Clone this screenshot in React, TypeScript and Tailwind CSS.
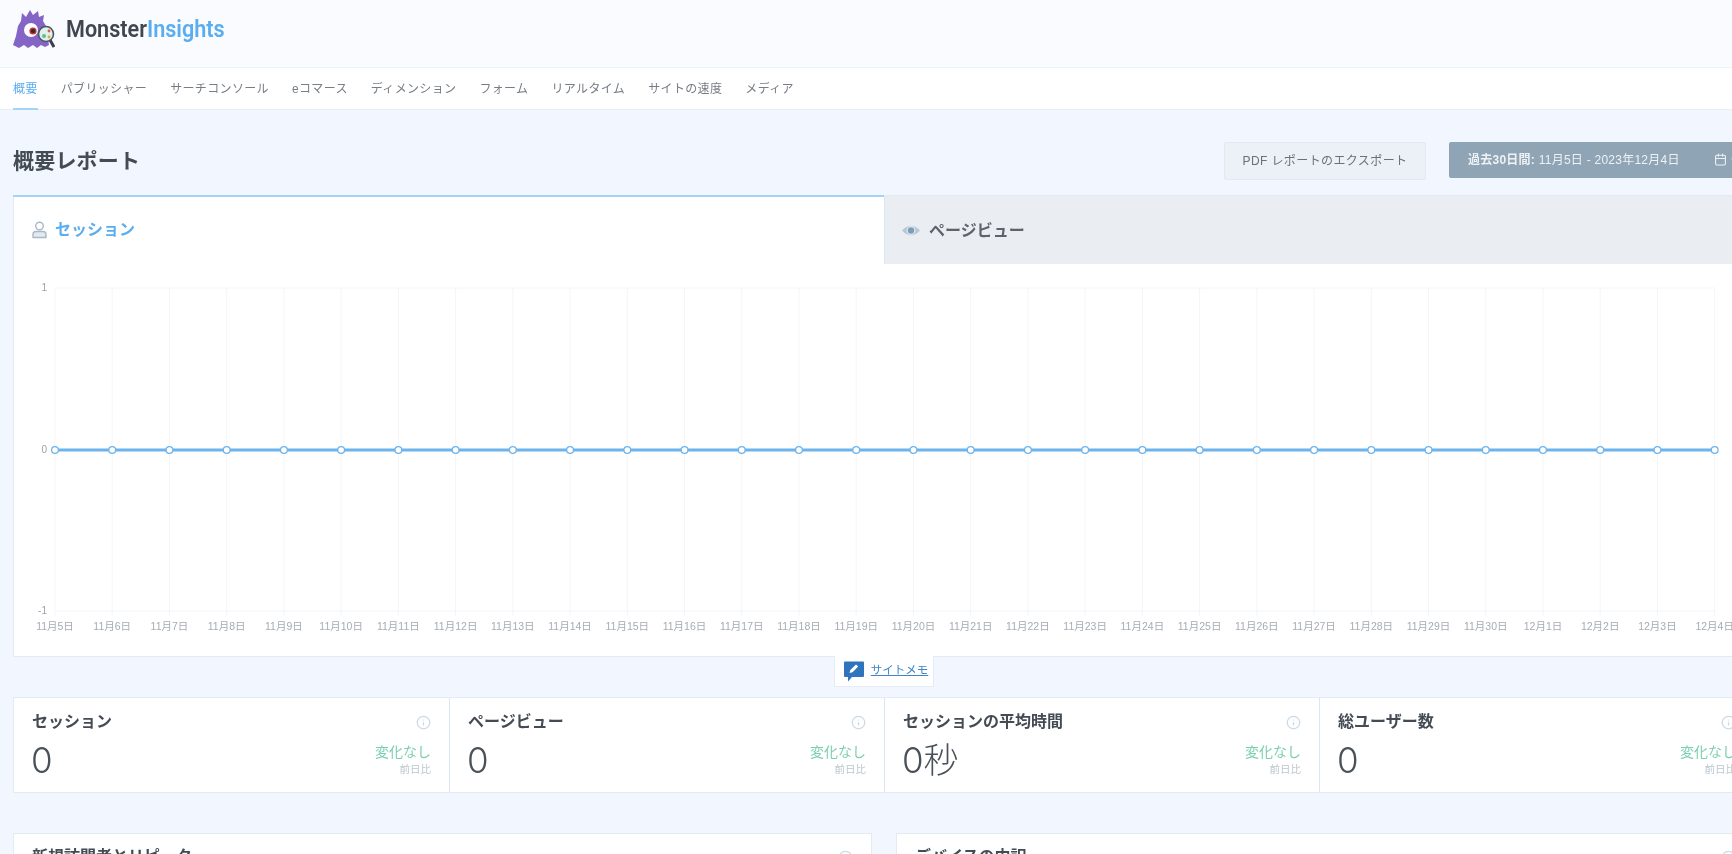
import { Calendar, ChevronDown, Info } from "lucide-react"

const navItems = ["概要", "パブリッシャー", "サーチコンソール", "eコマース", "ディメンション", "フォーム", "リアルタイム", "サイトの速度", "メディア"]

const kpis = [
    { title: "セッション", value: "0" },
    { title: "ページビュー", value: "0" },
    { title: "セッションの平均時間", value: "0秒" },
    { title: "総ユーザー数", value: "0" },
]

// 30 days, Nov 5 -> Dec 4
const days = Array.from({ length: 30 }, (_, i) => (i < 26 ? `11月${i + 5}日` : `12月${i - 25}日`))

const Logo = () => (
    <svg width="42" height="40" viewBox="0 0 42 40" className="shrink-0">
        <path
            d="M0 36 L3 27 L5 17 L8 12 L9 4 L13 8 L17 1 L20 6 L25 2 L26 8 L31 6 L30 12 L33 17 L34 24 L36 36 L32 38 L28 36 L24 39 L20 36 L15 39 L11 36 L6 39 Z"
            fill="#8465c6"
        />
        <circle cx="18" cy="21" r="7" fill="#fff" />
        <circle cx="20" cy="22" r="3.6" fill="#c9302c" />
        <circle cx="20" cy="22" r="2.1" fill="#2a2a33" />
        <path d="M37 31 L41 38" stroke="#3d3a55" strokeWidth="3" />
        <circle cx="33" cy="25" r="7.5" fill="#dff1ea" stroke="#4a5563" strokeWidth="1.6" />
        <circle cx="31" cy="27" r="2" fill="#5cc08f" />
        <circle cx="36" cy="22" r="1.4" fill="#e2574c" />
        <circle cx="36" cy="28" r="1.4" fill="#e9a23b" />
    </svg>
)

const UserIcon = () => (
    <svg width="15" height="18" viewBox="0 0 15 18" className="shrink-0">
        <circle cx="7.5" cy="5" r="3.8" fill="none" stroke="#a9b9c6" strokeWidth="1.4" />
        <path d="M1 16.5 V13.5 Q1 10.5 4 10.5 H11 Q14 10.5 14 13.5 V16.5 Z" fill="#e3e9ef" stroke="#a9b9c6" strokeWidth="1.4" strokeLinejoin="round" />
    </svg>
)

const EyeIcon = () => (
    <svg width="18" height="13" viewBox="0 0 18 13" className="shrink-0">
        <path d="M0 6.5 Q9 -3 18 6.5 Q9 16 0 6.5 Z" fill="#b4c7d6" />
        <circle cx="9" cy="6.5" r="4.4" fill="#e6edf2" />
        <circle cx="9" cy="6.5" r="3.2" fill="#7d9db6" />
    </svg>
)

const NoteIcon = () => (
    <svg width="20" height="21" viewBox="0 0 20 21" className="shrink-0">
        <path d="M1 0.5 H19 Q20 0.5 20 1.5 V15 Q20 16 19 16 H8 L4 20.5 V16 H1 Q0 16 0 15 V1.5 Q0 0.5 1 0.5 Z" fill="#2f74bd" />
        <path d="M5.5 12 L6.3 9 L12 3.4 L14.2 5.6 L8.5 11.2 Z" fill="#fff" />
    </svg>
)

const Chart = () => {
    const left = 41
    const step = 57.23
    const top = 24
    const bottom = 347
    const mid = 186
    const xs = days.map((_, i) => left + i * step)

    return (
        <svg width="1744" height="392" className="block">
            {[top, bottom].map((y) => (
                <line key={y} x1={left} x2={xs[29]} y1={y} y2={y} stroke="#f3f5f8" />
            ))}
            {xs.map((x) => (
                <line key={x} x1={x} x2={x} y1={top} y2={bottom + 5} stroke="#f3f5f8" />
            ))}
            {[["1", top], ["0", mid], ["-1", bottom]].map(([label, y]) => (
                <text key={label} x={left - 8} y={Number(y) + 3} textAnchor="end" fontSize="10" fill="#9aa3ad">
                    {label}
                </text>
            ))}
            <line x1={left} x2={xs[29]} y1={mid} y2={mid} stroke="#6db4ec" strokeWidth="3" />
            {xs.map((x) => (
                <circle key={x} cx={x} cy={mid} r="3.4" fill="#fff" stroke="#6db4ec" strokeWidth="1.3" />
            ))}
            {xs.map((x, i) => (
                <text key={days[i]} x={x} y={bottom + 19} textAnchor="middle" fontSize="10.5" fill="#a5acb5">
                    {days[i]}
                </text>
            ))}
        </svg>
    )
}

const App = () => {
    return (
        <div className="h-[854px] w-[1732px] overflow-hidden bg-[#f2f6fe] font-['Liberation_Sans','Noto_Sans_CJK_JP',sans-serif] text-[#444b54] blur-[0.5px]">
            <div className="w-[1770px]">
                {/* header */}
                <div className="flex h-[68px] items-center gap-[11px] border-b border-[#eef2f9] bg-[#f9fbff] pb-[10px] pl-[13px]">
                    <Logo />
                    <span className="inline-block origin-left scale-x-[0.9] font-['Roboto',sans-serif] text-[24px] font-semibold text-[#3f4650]">
                        Monster<span className="text-[#5aaef0]">Insights</span>
                    </span>
                </div>

                {/* nav */}
                <div className="flex h-[42px] gap-[23px] border-b border-[#e9eef6] bg-white pl-[13px]">
                    {navItems.map((item, i) => (
                        <div
                            key={item}
                            className={`flex h-[42px] items-center border-b-2 pt-[1px] text-[12px] tracking-[0.35px] ${
                                i === 0 ? "border-[#a5d3f6] text-[#5aaef0]" : "border-transparent text-[#777d85]"
                            }`}
                        >
                            {item}
                        </div>
                    ))}
                </div>

                <div className="pl-[13px] pr-[13px]">
                    {/* title row */}
                    <div className="flex h-[85px] items-center justify-between pt-[15px]">
                        <h1 className="text-[21px] leading-none font-bold tracking-[0.2px] text-[#444b54]">概要レポート</h1>
                        <div className="flex items-start gap-[23px] pt-[1px]">
                            <button className="h-[38px] w-[202px] rounded-[2px] border border-[#e3e9f3] bg-[#ecf0f7] text-[12px] tracking-[0.4px] text-[#6b7178]">
                                PDF レポートのエクスポート
                            </button>
                            <button className="flex h-[36px] w-[308px] items-center rounded-[2px] bg-[#8fa4b4] pl-[19px] text-[12px] tracking-[0.25px] text-[#eef2f5]">
                                <span>
                                    <b>過去30日間:</b> 11月5日 - 2023年12月4日
                                </span>
                                <Calendar size={13} className="ml-[34px]" />
                                <ChevronDown size={10} className="ml-[2px]" />
                            </button>
                        </div>
                    </div>

                    {/* report card */}
                    <div className="w-[1744px] border border-[#e3eaf4] bg-white">
                        <div className="flex h-[68px]">
                            <div className="-mt-px -ml-px flex w-[871px] items-center gap-[8px] border-t-2 border-[#a5d3f6] pb-[2px] pl-[19px] text-[16px] font-bold text-[#5aaef0]">
                                <UserIcon />
                                セッション
                            </div>
                            <div className="flex flex-1 items-center gap-[9px] border-l border-[#d8e6f5] bg-[#eaedf2] pt-[1px] pl-[17px] text-[16px] font-bold text-[#5d636b]">
                                <EyeIcon />
                                ページビュー
                            </div>
                        </div>
                        <Chart />
                    </div>

                    {/* site notes */}
                    <div className="flex w-[1742px] justify-center">
                        <div className="-mt-px flex h-[31px] items-center gap-[7px] border border-t-0 border-[#e6ecf5] bg-white pr-[5px] pl-[9px] text-[11.5px] text-[#3f86c6]">
                            <NoteIcon />
                            <span className="underline">サイトメモ</span>
                        </div>
                    </div>

                    {/* kpi row */}
                    <div className="mt-[10px] grid w-[1742px] grid-cols-4 border border-[#e3eaf4] bg-white">
                        {kpis.map((kpi, i) => (
                            <div
                                key={kpi.title}
                                className={`flex h-[94px] flex-col px-[18px] pt-[13px] ${i > 0 ? "border-l border-[#d8e6f5]" : ""}`}
                            >
                                <div className="flex items-center justify-between">
                                    <span className="text-[16px] leading-[22px] font-bold text-[#444b54]">{kpi.title}</span>
                                    <Info size={15} className="text-[#cbd9e8]" />
                                </div>
                                <div className="mt-[6px] flex items-start justify-between">
                                    <span className="-ml-[1px] font-['Inter','Noto_Sans_CJK_JP',sans-serif] text-[35px] leading-[42px] font-light text-[#4a5159]">{kpi.value}</span>
                                    <div className="flex flex-col items-end pt-[5px]">
                                        <span className="text-[14px] leading-[16px] text-[#7ccfae]">変化なし</span>
                                        <span className="text-[10.5px] leading-[18px] text-[#bcc6ce]">前日比</span>
                                    </div>
                                </div>
                            </div>
                        ))}
                    </div>

                    {/* bottom cards, cut off by the window */}
                    <div className="mt-[40px] flex w-[1742px] gap-[24px]">
                        <div className="flex h-[60px] flex-1 items-start justify-between border border-[#e3eaf4] bg-white px-[18px] pt-[12px]">
                            <span className="text-[16px] leading-[22px] font-bold">新規訪問者とリピーター</span>
                            <Info size={15} className="mt-[4px] text-[#cbd9e8]" />
                        </div>
                        <div className="flex h-[60px] flex-1 items-start justify-between border border-[#e3eaf4] bg-white px-[18px] pt-[12px]">
                            <span className="text-[16px] leading-[22px] font-bold">デバイスの内訳</span>
                            <Info size={15} className="mt-[4px] text-[#cbd9e8]" />
                        </div>
                    </div>
                </div>
            </div>
        </div>
    )
}

export default App
